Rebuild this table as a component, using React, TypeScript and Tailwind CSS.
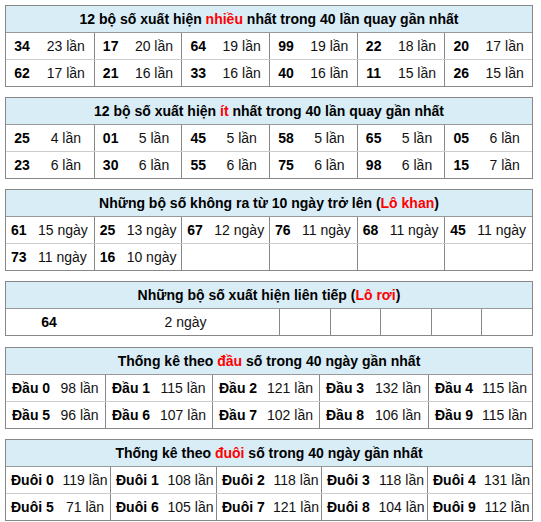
import React from 'react';

type Pair = [string, string];

const many: Pair[] = [
    ['34', '23 lần'], ['17', '20 lần'], ['64', '19 lần'], ['99', '19 lần'], ['22', '18 lần'], ['20', '17 lần'],
    ['62', '17 lần'], ['21', '16 lần'], ['33', '16 lần'], ['40', '16 lần'], ['11', '15 lần'], ['26', '15 lần'],
];

const few: Pair[] = [
    ['25', '4 lần'], ['01', '5 lần'], ['45', '5 lần'], ['58', '5 lần'], ['65', '5 lần'], ['05', '6 lần'],
    ['23', '6 lần'], ['30', '6 lần'], ['55', '6 lần'], ['75', '6 lần'], ['98', '6 lần'], ['15', '7 lần'],
];

const khan: Pair[] = [
    ['61', '15 ngày'], ['25', '13 ngày'], ['67', '12 ngày'], ['76', '11 ngày'], ['68', '11 ngày'], ['45', '11 ngày'],
    ['73', '11 ngày'], ['16', '10 ngày'], ['', ''], ['', ''], ['', ''], ['', ''],
];

const dau = ['98', '115', '121', '132', '115', '96', '107', '102', '106', '115'];
const duoi = ['119', '108', '118', '118', '131', '71', '105', '121', '104', '112'];

// header is 27px tall including its bottom border
function Box({ title, children, className = '' }: { title: React.ReactNode; children: React.ReactNode; className?: string }) {
    return (
        <div className={`border border-[#888] w-[528px] ${className}`}>
            <div className="h-[27px] leading-[26px] bg-[#d9edf7] border-b border-[#999] text-center font-bold text-[14px] text-black">
                {title}
            </div>
            {children}
        </div>
    );
}

const red = (s: string) => <span className="text-[#f00]">{s}</span>;

function rows<T>(items: T[], perRow: number): T[][] {
    const out: T[][] = [];
    for (let i = 0; i < items.length; i += perRow) out.push(items.slice(i, i + perRow));
    return out;
}

function LotoTable({ items }: { items: Pair[] }) {
    return (
        <>
            {rows(items, 6).map((row, r) => (
                <div key={r} className={`grid grid-cols-6 ${r > 0 ? 'h-[27px] border-t border-[#ccc]' : 'h-[26px]'}`}>
                    {row.map(([n, c], i) => (
                        <div key={i} className={`flex items-center ${i > 0 ? 'border-l border-[#888]' : ''}`}>
                            <span className="w-[32px] text-center font-bold text-black">{n}</span>
                            <span className="flex-1 text-center text-[#111]">{c}</span>
                        </div>
                    ))}
                </div>
            ))}
        </>
    );
}

export default function App() {
    return (
        <div className="pl-[5px] pt-[5px] flex flex-col gap-[10px] text-[14px] font-['Liberation_Sans',Arial,sans-serif] text-black">
            <Box title={<>12 bộ số xuất hiện {red('nhiều')} nhất trong 40 lần quay gần nhất</>}>
                <LotoTable items={many} />
            </Box>

            <Box title={<>12 bộ số xuất hiện {red('ít')} nhất trong 40 lần quay gần nhất</>}>
                <LotoTable items={few} />
            </Box>

            <Box title={<>Những bộ số không ra từ 10 ngày trở lên ({red('Lô khan')})</>}>
                {rows(khan, 6).map((row, r) => (
                    <div key={r} className={`grid grid-cols-6 ${r > 0 ? 'h-[27px] border-t border-[#ccc]' : 'h-[26px]'}`}>
                        {row.map(([n, c], i) => (
                            <div key={i} className={`flex items-center pl-[5px] ${i > 0 ? 'border-l border-[#888]' : ''}`}>
                                <span className="w-[27px] font-bold">{n}</span>
                                <span className="text-[#111]">{c}</span>
                            </div>
                        ))}
                    </div>
                ))}
            </Box>

            <Box title={<>Những bộ số xuất hiện liên tiếp ({red('Lô rơi')})</>}>
                <div className="grid grid-cols-[273px_repeat(5,1fr)] h-[26px]">
                    <div className="flex items-center">
                        <span className="w-[86px] text-center font-bold">64</span>
                        <span className="flex-1 text-center text-[#111]">2 ngày</span>
                    </div>
                    {[0, 1, 2, 3, 4].map((i) => (
                        <div key={i} className="border-l border-[#888]" />
                    ))}
                </div>
            </Box>

            <Box className="mt-[1px]" title={<>Thống kê theo {red('đầu')} số trong 40 ngày gần nhất</>}>
                {[0, 1].map((r) => (
                    <div key={r} className={`grid grid-cols-[99px_107px_107px_109px_1fr] ${r > 0 ? 'h-[27px] border-t border-[#ccc]' : 'h-[26px]'}`}>
                        {[0, 1, 2, 3, 4].map((i) => {
                            const d = r * 5 + i;
                            return (
                                <div key={i} className={`flex items-center ${i > 0 ? 'border-l border-[#888]' : ''}`}>
                                    <span className="w-[48px] pl-[6px] font-bold whitespace-nowrap">Đầu {d}</span>
                                    <span className="flex-1 text-center text-[#111] whitespace-nowrap">{dau[d]} lần</span>
                                </div>
                            );
                        })}
                    </div>
                ))}
            </Box>

            <Box title={<>Thống kê theo {red('đuôi')} số trong 40 ngày gần nhất</>}>
                {[0, 1].map((r) => (
                    <div key={r} className={`grid grid-cols-[104px_106px_105px_106px_1fr] ${r > 0 ? 'h-[27px] border-t border-[#ccc]' : 'h-[26px]'}`}>
                        {[0, 1, 2, 3, 4].map((i) => {
                            const d = r * 5 + i;
                            return (
                                <div key={i} className={`flex items-center ${i > 0 ? 'border-l border-[#888]' : ''}`}>
                                    <span className="w-[54px] pl-[5px] font-bold whitespace-nowrap">Đuôi {d}</span>
                                    <span className="flex-1 text-center text-[#111] whitespace-nowrap">{duoi[d]} lần</span>
                                </div>
                            );
                        })}
                    </div>
                ))}
            </Box>
        </div>
    );
}
